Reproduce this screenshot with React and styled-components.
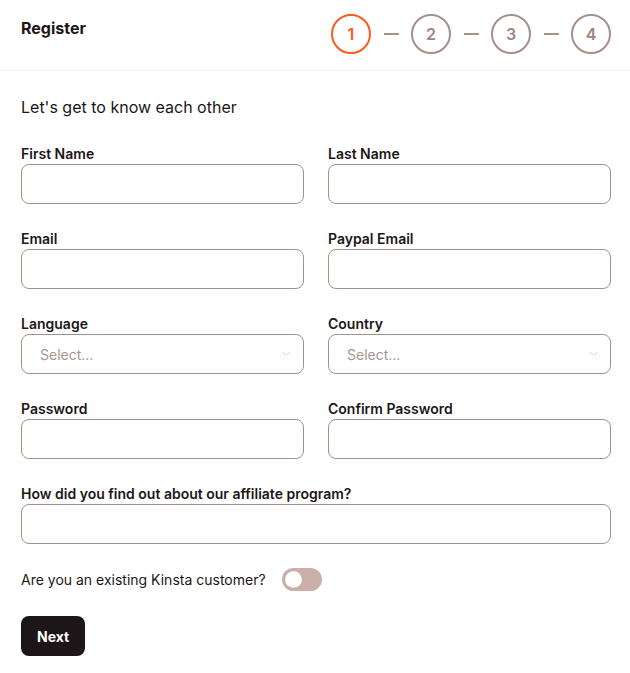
import React from "react";
import styled, { createGlobalStyle } from "styled-components";

const Global = createGlobalStyle`
  html, body { margin: 0; padding: 0; background: #fff; }
  body { font-family: Inter, "Noto Sans", sans-serif; color: #1c1618; }
  * { box-sizing: border-box; }
`;

const Page = styled.div`
  width: 630px;
  min-height: 673px;
  background: #fff;
`;

const Header = styled.header`
  height: 71px;
  display: flex;
  align-items: flex-start;
  justify-content: space-between;
  padding: 14px 19px 0 21px;
  border-bottom: 1px solid #eef0f5;
`;

const Title = styled.h1`
  margin: 4px 0 0;
  font-size: 16px;
  font-weight: 700;
  line-height: 20px;
  color: #1c1618;
`;

const Steps = styled.div`
  display: flex;
  align-items: center;
`;

const Step = styled.div`
  width: 40px;
  height: 40px;
  border-radius: 50%;
  border: 2px solid ${(p) => (p.$active ? "#fe5a1d" : "#a5908a")};
  color: ${(p) => (p.$active ? "#fe5a1d" : "#a0857d")};
  display: flex;
  align-items: center;
  justify-content: center;
  font-size: 16px;
  font-weight: 600;
`;

const Dash = styled.span`
  width: 15px;
  height: 2px;
  margin: 0 12.5px;
  background: #a5908a;
`;

const Body = styled.main`
  padding: 25px 19px 0 21px;
`;

const Intro = styled.p`
  margin: 0 0 27px;
  font-size: 16px;
  line-height: 22px;
  color: #1c1618;
`;

const Grid = styled.div`
  display: grid;
  grid-template-columns: 1fr 1fr;
  column-gap: 24px;
  row-gap: 26px;
`;

const Field = styled.label`
  display: flex;
  flex-direction: column;
  gap: 2px;
  grid-column: ${(p) => (p.$wide ? "1 / -1" : "auto")};
`;

const Label = styled.span`
  font-size: 14px;
  font-weight: 600;
  line-height: 17px;
  color: #1c1618;
`;

const Input = styled.input`
  height: 40px;
  width: 100%;
  border: 1px solid #a5908a;
  border-radius: 8px;
  padding: 0 18px;
  font: inherit;
  font-size: 14px;
  background: #fff;
  outline: none;
`;

const SelectBox = styled.div`
  height: 40px;
  border: 1px solid #a5908a;
  border-radius: 8px;
  padding: 0 12px 0 18px;
  display: flex;
  align-items: center;
  justify-content: space-between;
  font-size: 14px;
  color: #a89590;
`;

const Toggle = styled.div`
  display: flex;
  align-items: center;
  gap: 16px;
  margin-top: 24px;
  font-size: 14px;
  color: #1c1618;
`;

const Switch = styled.span`
  width: 40px;
  height: 23px;
  border-radius: 12px;
  background: #cbb0a9;
  display: flex;
  align-items: center;
  padding: 0 3px;
`;

const Knob = styled.span`
  width: 17px;
  height: 17px;
  border-radius: 50%;
  background: #fff;
  box-shadow: 0 0 1px rgba(0, 0, 0, 0.3);
`;

const Button = styled.button`
  margin-top: 25px;
  height: 40px;
  padding: 0 16px;
  border: none;
  border-radius: 8px;
  background: #1c1618;
  color: #fff;
  font: inherit;
  font-size: 14px;
  font-weight: 700;
`;

const Chevron = () => (
  <svg width="9" height="6" viewBox="0 0 9 6" fill="none">
    <path d="M1 1l3.5 3.5L8 1" stroke="#cdd2dc" strokeWidth="1" />
  </svg>
);

const Select = () => (
  <SelectBox>
    <span>Select...</span>
    <Chevron />
  </SelectBox>
);

export default function App() {
  return (
    <Page>
      <Global />
      <Header>
        <Title>Register</Title>
        <Steps>
          <Step $active>1</Step>
          <Dash />
          <Step>2</Step>
          <Dash />
          <Step>3</Step>
          <Dash />
          <Step>4</Step>
        </Steps>
      </Header>
      <Body>
        <Intro>Let's get to know each other</Intro>
        <Grid>
          <Field>
            <Label>First Name</Label>
            <Input />
          </Field>
          <Field>
            <Label>Last Name</Label>
            <Input />
          </Field>
          <Field>
            <Label>Email</Label>
            <Input />
          </Field>
          <Field>
            <Label>Paypal Email</Label>
            <Input />
          </Field>
          <Field as="div">
            <Label>Language</Label>
            <Select />
          </Field>
          <Field as="div">
            <Label>Country</Label>
            <Select />
          </Field>
          <Field>
            <Label>Password</Label>
            <Input type="password" />
          </Field>
          <Field>
            <Label>Confirm Password</Label>
            <Input type="password" />
          </Field>
          <Field $wide>
            <Label>How did you find out about our affiliate program?</Label>
            <Input />
          </Field>
        </Grid>
        <Toggle>
          <span>Are you an existing Kinsta customer?</span>
          <Switch>
            <Knob />
          </Switch>
        </Toggle>
        <Button>Next</Button>
      </Body>
    </Page>
  );
}
